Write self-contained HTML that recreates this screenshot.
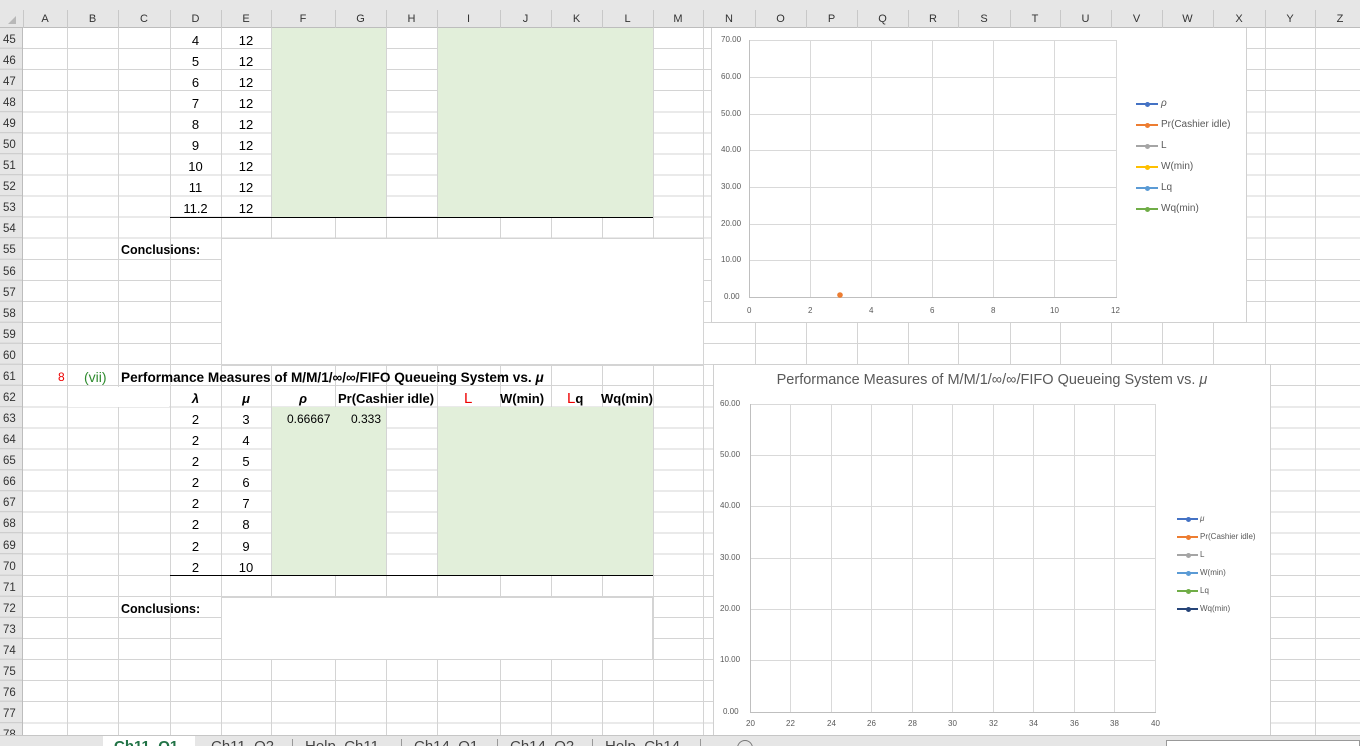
<!DOCTYPE html>
<html><head><meta charset="utf-8"><style>
*{margin:0;padding:0;box-sizing:border-box}
body{width:1360px;height:746px;overflow:hidden;position:relative;background:#fff;font-family:"Liberation Sans",Arial,sans-serif;color:#000}
.a{position:absolute}
.grid{position:absolute;left:23px;top:27.7px;width:1337px;height:710px;background:repeating-linear-gradient(to bottom,transparent 0,transparent 20.07px,#d4d4d4 20.07px,#d4d4d4 21.07px)}
.v{position:absolute;top:28px;width:1px;height:710px;background:#d4d4d4}
.hdr{position:absolute;left:0;top:0;width:1360px;height:28px;background:#e6e6e6;border-bottom:1px solid #bdbdbd}
.hl{position:absolute;top:10px;font-size:11px;color:#333;text-align:center;height:18px;line-height:18px}
.hs{position:absolute;top:10px;width:1px;height:18px;background:#c8c8c8}
.rh{position:absolute;left:0;top:28px;width:23px;height:710px;background:#e6e6e6;border-right:1px solid #bdbdbd}
.rn{position:absolute;left:3px;font-size:11.5px;color:#333;height:21px;line-height:25px}
.c{position:absolute;height:21px;line-height:25px;font-size:13px;white-space:nowrap}
.ctr{text-align:center}
.b{font-weight:bold}
.g{position:absolute;background:#e2efda}
.wt{position:absolute;background:#fff}
.ax{position:absolute;font-size:8px;color:#595959;white-space:nowrap}
.lg{position:absolute;height:2px}
.lg::after{content:"";position:absolute;left:9px;top:-1.5px;width:5px;height:5px;border-radius:50%;background:inherit}
.lt{position:absolute;font-size:10px;color:#595959;white-space:nowrap;line-height:12px}
</style></head><body>
<div class="grid"></div>
<div class="v" style="left:67px"></div><div class="v" style="left:118px"></div><div class="v" style="left:170px"></div><div class="v" style="left:221px"></div><div class="v" style="left:271px"></div><div class="v" style="left:335px"></div><div class="v" style="left:386px"></div><div class="v" style="left:437px"></div><div class="v" style="left:500px"></div><div class="v" style="left:551px"></div><div class="v" style="left:602px"></div><div class="v" style="left:653px"></div><div class="v" style="left:703px"></div><div class="v" style="left:755px"></div><div class="v" style="left:806px"></div><div class="v" style="left:857px"></div><div class="v" style="left:908px"></div><div class="v" style="left:958px"></div><div class="v" style="left:1010px"></div><div class="v" style="left:1060px"></div><div class="v" style="left:1111px"></div><div class="v" style="left:1162px"></div><div class="v" style="left:1213px"></div><div class="v" style="left:1265px"></div><div class="v" style="left:1315px"></div>

<div class="g" style="left:272px;top:28px;width:114px;height:189px"></div>
<div class="g" style="left:438px;top:28px;width:215px;height:189px"></div>
<div class="g" style="left:272px;top:407px;width:114px;height:168px"></div>
<div class="g" style="left:438px;top:407px;width:215px;height:168px"></div>
<div class="a" style="left:170px;top:216.5px;width:483px;height:1.5px;background:#000"></div>
<div class="a" style="left:170px;top:574.5px;width:483px;height:1.5px;background:#000"></div>
<div class="wt" style="left:222px;top:239.4px;width:481px;height:125px"></div>
<div class="a" style="left:221px;top:238.4px;width:483px;height:127.5px;border:1px solid #d4d4d4"></div>
<div class="wt" style="left:222px;top:597.7px;width:430px;height:61px"></div>
<div class="a" style="left:221px;top:596.7px;width:432px;height:63px;border:1px solid #d4d4d4"></div>
<div class="wt" style="left:68px;top:386.9px;width:101px;height:20px"></div>

<div class="hdr"></div>
<div class="a" style="left:8px;top:16px;width:0;height:0;border-left:8px solid transparent;border-bottom:8px solid #b8b8b8"></div>
<div class="hl" style="left:23px;width:44px">A</div><div class="hl" style="left:67px;width:51px">B</div><div class="hl" style="left:118px;width:52px">C</div><div class="hl" style="left:170px;width:51px">D</div><div class="hl" style="left:221px;width:50px">E</div><div class="hl" style="left:271px;width:64px">F</div><div class="hl" style="left:335px;width:51px">G</div><div class="hl" style="left:386px;width:51px">H</div><div class="hl" style="left:437px;width:63px">I</div><div class="hl" style="left:500px;width:51px">J</div><div class="hl" style="left:551px;width:51px">K</div><div class="hl" style="left:602px;width:51px">L</div><div class="hl" style="left:653px;width:50px">M</div><div class="hl" style="left:703px;width:52px">N</div><div class="hl" style="left:755px;width:51px">O</div><div class="hl" style="left:806px;width:51px">P</div><div class="hl" style="left:857px;width:51px">Q</div><div class="hl" style="left:908px;width:50px">R</div><div class="hl" style="left:958px;width:52px">S</div><div class="hl" style="left:1010px;width:50px">T</div><div class="hl" style="left:1060px;width:51px">U</div><div class="hl" style="left:1111px;width:51px">V</div><div class="hl" style="left:1162px;width:51px">W</div><div class="hl" style="left:1213px;width:52px">X</div><div class="hl" style="left:1265px;width:50px">Y</div><div class="hl" style="left:1315px;width:50px">Z</div>
<div class="hs" style="left:23px"></div><div class="hs" style="left:67px"></div><div class="hs" style="left:118px"></div><div class="hs" style="left:170px"></div><div class="hs" style="left:221px"></div><div class="hs" style="left:271px"></div><div class="hs" style="left:335px"></div><div class="hs" style="left:386px"></div><div class="hs" style="left:437px"></div><div class="hs" style="left:500px"></div><div class="hs" style="left:551px"></div><div class="hs" style="left:602px"></div><div class="hs" style="left:653px"></div><div class="hs" style="left:703px"></div><div class="hs" style="left:755px"></div><div class="hs" style="left:806px"></div><div class="hs" style="left:857px"></div><div class="hs" style="left:908px"></div><div class="hs" style="left:958px"></div><div class="hs" style="left:1010px"></div><div class="hs" style="left:1060px"></div><div class="hs" style="left:1111px"></div><div class="hs" style="left:1162px"></div><div class="hs" style="left:1213px"></div><div class="hs" style="left:1265px"></div><div class="hs" style="left:1315px"></div>

<div class="rh" style="background:repeating-linear-gradient(to bottom,transparent 0,transparent 20.07px,#c8c8c8 20.07px,#c8c8c8 21.07px) 0 -0.3px,#e6e6e6"></div>
<div class="rn" style="top:27.7px">45</div><div class="rn" style="top:48.8px">46</div><div class="rn" style="top:69.8px">47</div><div class="rn" style="top:90.9px">48</div><div class="rn" style="top:112px">49</div><div class="rn" style="top:133px">50</div><div class="rn" style="top:154.1px">51</div><div class="rn" style="top:175.2px">52</div><div class="rn" style="top:196.3px">53</div><div class="rn" style="top:217.3px">54</div><div class="rn" style="top:238.4px">55</div><div class="rn" style="top:259.5px">56</div><div class="rn" style="top:280.6px">57</div><div class="rn" style="top:301.6px">58</div><div class="rn" style="top:322.7px">59</div><div class="rn" style="top:343.8px">60</div><div class="rn" style="top:364.9px">61</div><div class="rn" style="top:385.9px">62</div><div class="rn" style="top:407px">63</div><div class="rn" style="top:428.1px">64</div><div class="rn" style="top:449.2px">65</div><div class="rn" style="top:470.2px">66</div><div class="rn" style="top:491.3px">67</div><div class="rn" style="top:512.4px">68</div><div class="rn" style="top:533.5px">69</div><div class="rn" style="top:554.5px">70</div><div class="rn" style="top:575.6px">71</div><div class="rn" style="top:596.7px">72</div><div class="rn" style="top:617.8px">73</div><div class="rn" style="top:638.8px">74</div><div class="rn" style="top:659.9px">75</div><div class="rn" style="top:681px">76</div><div class="rn" style="top:702.1px">77</div><div class="rn" style="top:723.1px">78</div>

<div class="c ctr" style="left:170px;width:51px;top:27.7px">4</div><div class="c ctr" style="left:221px;width:50px;top:27.7px">12</div>
<div class="c ctr" style="left:170px;width:51px;top:48.8px">5</div><div class="c ctr" style="left:221px;width:50px;top:48.8px">12</div>
<div class="c ctr" style="left:170px;width:51px;top:69.8px">6</div><div class="c ctr" style="left:221px;width:50px;top:69.8px">12</div>
<div class="c ctr" style="left:170px;width:51px;top:90.9px">7</div><div class="c ctr" style="left:221px;width:50px;top:90.9px">12</div>
<div class="c ctr" style="left:170px;width:51px;top:112px">8</div><div class="c ctr" style="left:221px;width:50px;top:112px">12</div>
<div class="c ctr" style="left:170px;width:51px;top:133px">9</div><div class="c ctr" style="left:221px;width:50px;top:133px">12</div>
<div class="c ctr" style="left:170px;width:51px;top:154.1px">10</div><div class="c ctr" style="left:221px;width:50px;top:154.1px">12</div>
<div class="c ctr" style="left:170px;width:51px;top:175.2px">11</div><div class="c ctr" style="left:221px;width:50px;top:175.2px">12</div>
<div class="c ctr" style="left:170px;width:51px;top:196.3px">11.2</div><div class="c ctr" style="left:221px;width:50px;top:196.3px">12</div>
<div class="c b" style="left:121px;top:238.4px;font-size:12.5px">Conclusions:</div>

<div class="c" style="left:58px;top:364.9px;color:#e00;font-size:12px">8</div>
<div class="c" style="left:84px;top:364.9px;color:#2e8b2e;font-size:14px">(vii)</div>
<div class="c b" style="left:121px;top:364.9px;font-size:13.6px">Performance Measures of M/M/1/&infin;/&infin;/FIFO Queueing System vs. <i>&mu;</i></div>
<div class="c b ctr" style="left:170px;width:51px;top:385.9px"><i>&lambda;</i></div>
<div class="c b ctr" style="left:221px;width:50px;top:385.9px"><i>&mu;</i></div>
<div class="c b ctr" style="left:271px;width:64px;top:385.9px"><i>&rho;</i></div>
<div class="c b" style="left:338px;top:385.9px">Pr(Cashier idle)</div>
<div class="c" style="left:464px;top:385.9px;color:#e00;font-size:15px">L</div>
<div class="c b" style="left:500px;top:385.9px">W(min)</div>
<div class="c b" style="left:567px;top:385.9px"><span style="color:#e00;font-weight:normal;font-size:15px">L</span>q</div>
<div class="c b" style="left:601px;top:385.9px">Wq(min)</div>
<div class="c" style="left:287px;top:407px;font-size:12px">0.66667</div>
<div class="c" style="left:351px;top:407px;font-size:12px">0.333</div>
<div class="c ctr" style="left:170px;width:51px;top:407px">2</div><div class="c ctr" style="left:221px;width:50px;top:407px">3</div>
<div class="c ctr" style="left:170px;width:51px;top:428.1px">2</div><div class="c ctr" style="left:221px;width:50px;top:428.1px">4</div>
<div class="c ctr" style="left:170px;width:51px;top:449.2px">2</div><div class="c ctr" style="left:221px;width:50px;top:449.2px">5</div>
<div class="c ctr" style="left:170px;width:51px;top:470.2px">2</div><div class="c ctr" style="left:221px;width:50px;top:470.2px">6</div>
<div class="c ctr" style="left:170px;width:51px;top:491.3px">2</div><div class="c ctr" style="left:221px;width:50px;top:491.3px">7</div>
<div class="c ctr" style="left:170px;width:51px;top:512.4px">2</div><div class="c ctr" style="left:221px;width:50px;top:512.4px">8</div>
<div class="c ctr" style="left:170px;width:51px;top:533.5px">2</div><div class="c ctr" style="left:221px;width:50px;top:533.5px">9</div>
<div class="c ctr" style="left:170px;width:51px;top:554.5px">2</div><div class="c ctr" style="left:221px;width:50px;top:554.5px">10</div>
<div class="c b" style="left:121px;top:596.7px;font-size:12.5px">Conclusions:</div>

<div class="a" style="left:711px;top:28px;width:536px;height:295px;background:#fff;border:1px solid #d0d0d0;border-top:none"></div>
<svg class="a" style="left:711px;top:28px" width="536" height="295">
<g stroke="#d9d9d9" stroke-width="1">
<line x1="38" y1="12.5" x2="406" y2="12.5"/><line x1="38" y1="49.5" x2="406" y2="49.5"/><line x1="38" y1="86.5" x2="406" y2="86.5"/><line x1="38" y1="122.5" x2="406" y2="122.5"/><line x1="38" y1="159.5" x2="406" y2="159.5"/><line x1="38" y1="196.5" x2="406" y2="196.5"/><line x1="38" y1="232.5" x2="406" y2="232.5"/>
<line x1="99.5" y1="12" x2="99.5" y2="269"/><line x1="160.5" y1="12" x2="160.5" y2="269"/><line x1="221.5" y1="12" x2="221.5" y2="269"/><line x1="282.5" y1="12" x2="282.5" y2="269"/><line x1="343.5" y1="12" x2="343.5" y2="269"/><line x1="405.5" y1="12" x2="405.5" y2="269"/>
</g>
<line x1="38.5" y1="12" x2="38.5" y2="269" stroke="#bfbfbf"/>
<line x1="38" y1="269.5" x2="406" y2="269.5" stroke="#bfbfbf"/>
<circle cx="129" cy="267" r="2.8" fill="#ed7d31"/>
</svg>
<div class="ax" style="left:721px;top:35px">70.00</div><div class="ax" style="left:721px;top:72px">60.00</div><div class="ax" style="left:721px;top:109px">50.00</div><div class="ax" style="left:721px;top:145px">40.00</div><div class="ax" style="left:721px;top:182px">30.00</div><div class="ax" style="left:721px;top:219px">20.00</div><div class="ax" style="left:721px;top:255px">10.00</div><div class="ax" style="left:724px;top:292px">0.00</div>
<div class="ax" style="left:747px;top:306px">0</div><div class="ax" style="left:808px;top:306px">2</div><div class="ax" style="left:869px;top:306px">4</div><div class="ax" style="left:930px;top:306px">6</div><div class="ax" style="left:991px;top:306px">8</div><div class="ax" style="left:1050px;top:306px">10</div><div class="ax" style="left:1111px;top:306px">12</div>
<div class="lg" style="left:1136px;top:103px;width:22px;background:#4472c4"></div><div class="lt" style="left:1161px;top:98px"><i>&rho;</i></div>
<div class="lg" style="left:1136px;top:124px;width:22px;background:#ed7d31"></div><div class="lt" style="left:1161px;top:119px">Pr(Cashier idle)</div>
<div class="lg" style="left:1136px;top:145px;width:22px;background:#a5a5a5"></div><div class="lt" style="left:1161px;top:140px">L</div>
<div class="lg" style="left:1136px;top:166px;width:22px;background:#ffc000"></div><div class="lt" style="left:1161px;top:161px">W(min)</div>
<div class="lg" style="left:1136px;top:187px;width:22px;background:#5b9bd5"></div><div class="lt" style="left:1161px;top:182px">Lq</div>
<div class="lg" style="left:1136px;top:208px;width:22px;background:#70ad47"></div><div class="lt" style="left:1161px;top:203px">Wq(min)</div>

<div class="a" style="left:713px;top:364px;width:558px;height:380px;background:#fff;border:1px solid #d0d0d0"></div>
<div class="a" style="left:713px;top:372px;width:558px;text-align:center;font-size:14.5px;color:#595959;white-space:nowrap">Performance Measures of M/M/1/&infin;/&infin;/FIFO Queueing System vs. <i>&mu;</i></div>
<svg class="a" style="left:713px;top:364px" width="558" height="380">
<g stroke="#d9d9d9" stroke-width="1">
<line x1="37" y1="40.5" x2="443" y2="40.5"/><line x1="37" y1="91.5" x2="443" y2="91.5"/><line x1="37" y1="142.5" x2="443" y2="142.5"/><line x1="37" y1="194.5" x2="443" y2="194.5"/><line x1="37" y1="245.5" x2="443" y2="245.5"/><line x1="37" y1="296.5" x2="443" y2="296.5"/>
<line x1="77.5" y1="40" x2="77.5" y2="348"/><line x1="118.5" y1="40" x2="118.5" y2="348"/><line x1="158.5" y1="40" x2="158.5" y2="348"/><line x1="199.5" y1="40" x2="199.5" y2="348"/><line x1="239.5" y1="40" x2="239.5" y2="348"/><line x1="280.5" y1="40" x2="280.5" y2="348"/><line x1="320.5" y1="40" x2="320.5" y2="348"/><line x1="361.5" y1="40" x2="361.5" y2="348"/><line x1="401.5" y1="40" x2="401.5" y2="348"/><line x1="442.5" y1="40" x2="442.5" y2="348"/>
</g>
<line x1="37.5" y1="40" x2="37.5" y2="348" stroke="#bfbfbf"/>
<line x1="37" y1="348.5" x2="443" y2="348.5" stroke="#bfbfbf"/>
</svg>
<div class="ax" style="left:720px;top:399px">60.00</div><div class="ax" style="left:720px;top:450px">50.00</div><div class="ax" style="left:720px;top:501px">40.00</div><div class="ax" style="left:720px;top:553px">30.00</div><div class="ax" style="left:720px;top:604px">20.00</div><div class="ax" style="left:720px;top:655px">10.00</div><div class="ax" style="left:723px;top:707px">0.00</div>
<div class="ax" style="left:746px;top:719px">20</div><div class="ax" style="left:786px;top:719px">22</div><div class="ax" style="left:827px;top:719px">24</div><div class="ax" style="left:867px;top:719px">26</div><div class="ax" style="left:908px;top:719px">28</div><div class="ax" style="left:948px;top:719px">30</div><div class="ax" style="left:989px;top:719px">32</div><div class="ax" style="left:1029px;top:719px">34</div><div class="ax" style="left:1070px;top:719px">36</div><div class="ax" style="left:1110px;top:719px">38</div><div class="ax" style="left:1151px;top:719px">40</div>
<div class="lg" style="left:1177px;top:518px;width:21px;background:#4472c4"></div><div class="lt" style="left:1200px;top:513px;font-size:8px"><i>&mu;</i></div>
<div class="lg" style="left:1177px;top:536px;width:21px;background:#ed7d31"></div><div class="lt" style="left:1200px;top:531px;font-size:8px">Pr(Cashier idle)</div>
<div class="lg" style="left:1177px;top:554px;width:21px;background:#a5a5a5"></div><div class="lt" style="left:1200px;top:549px;font-size:8px">L</div>
<div class="lg" style="left:1177px;top:572px;width:21px;background:#5b9bd5"></div><div class="lt" style="left:1200px;top:567px;font-size:8px">W(min)</div>
<div class="lg" style="left:1177px;top:590px;width:21px;background:#70ad47"></div><div class="lt" style="left:1200px;top:585px;font-size:8px">Lq</div>
<div class="lg" style="left:1177px;top:608px;width:21px;background:#264478"></div><div class="lt" style="left:1200px;top:603px;font-size:8px">Wq(min)</div>

<div class="a" style="left:0;top:735px;width:1360px;height:11px;background:#e6e6e6;border-top:1px solid #c6c6c6;overflow:hidden">
<div class="a" style="left:103px;top:-1px;width:92px;height:13px;background:#fff"></div>
<div class="a" style="left:114px;top:2px;font-size:15px;font-weight:bold;color:#217346">Ch11_Q1</div>
<div class="a" style="left:211px;top:2px;font-size:15px;color:#444">Ch11_Q2</div>
<div class="a" style="left:292px;top:3px;width:1px;height:8px;background:#999"></div>
<div class="a" style="left:305px;top:2px;font-size:15px;color:#444">Help_Ch11</div>
<div class="a" style="left:401px;top:3px;width:1px;height:8px;background:#999"></div>
<div class="a" style="left:414px;top:2px;font-size:15px;color:#444">Ch14_Q1</div>
<div class="a" style="left:497px;top:3px;width:1px;height:8px;background:#999"></div>
<div class="a" style="left:510px;top:2px;font-size:15px;color:#444">Ch14_Q2</div>
<div class="a" style="left:592px;top:3px;width:1px;height:8px;background:#999"></div>
<div class="a" style="left:605px;top:2px;font-size:15px;color:#444">Help_Ch14</div>
<div class="a" style="left:700px;top:3px;width:1px;height:8px;background:#999"></div>
<div class="a" style="left:737px;top:4px;width:16px;height:16px;border:1px solid #777;border-radius:50%"></div>
<div class="a" style="left:1166px;top:4px;width:194px;height:10px;background:#fff;border:1px solid #999"></div>
</div>
</body></html>
